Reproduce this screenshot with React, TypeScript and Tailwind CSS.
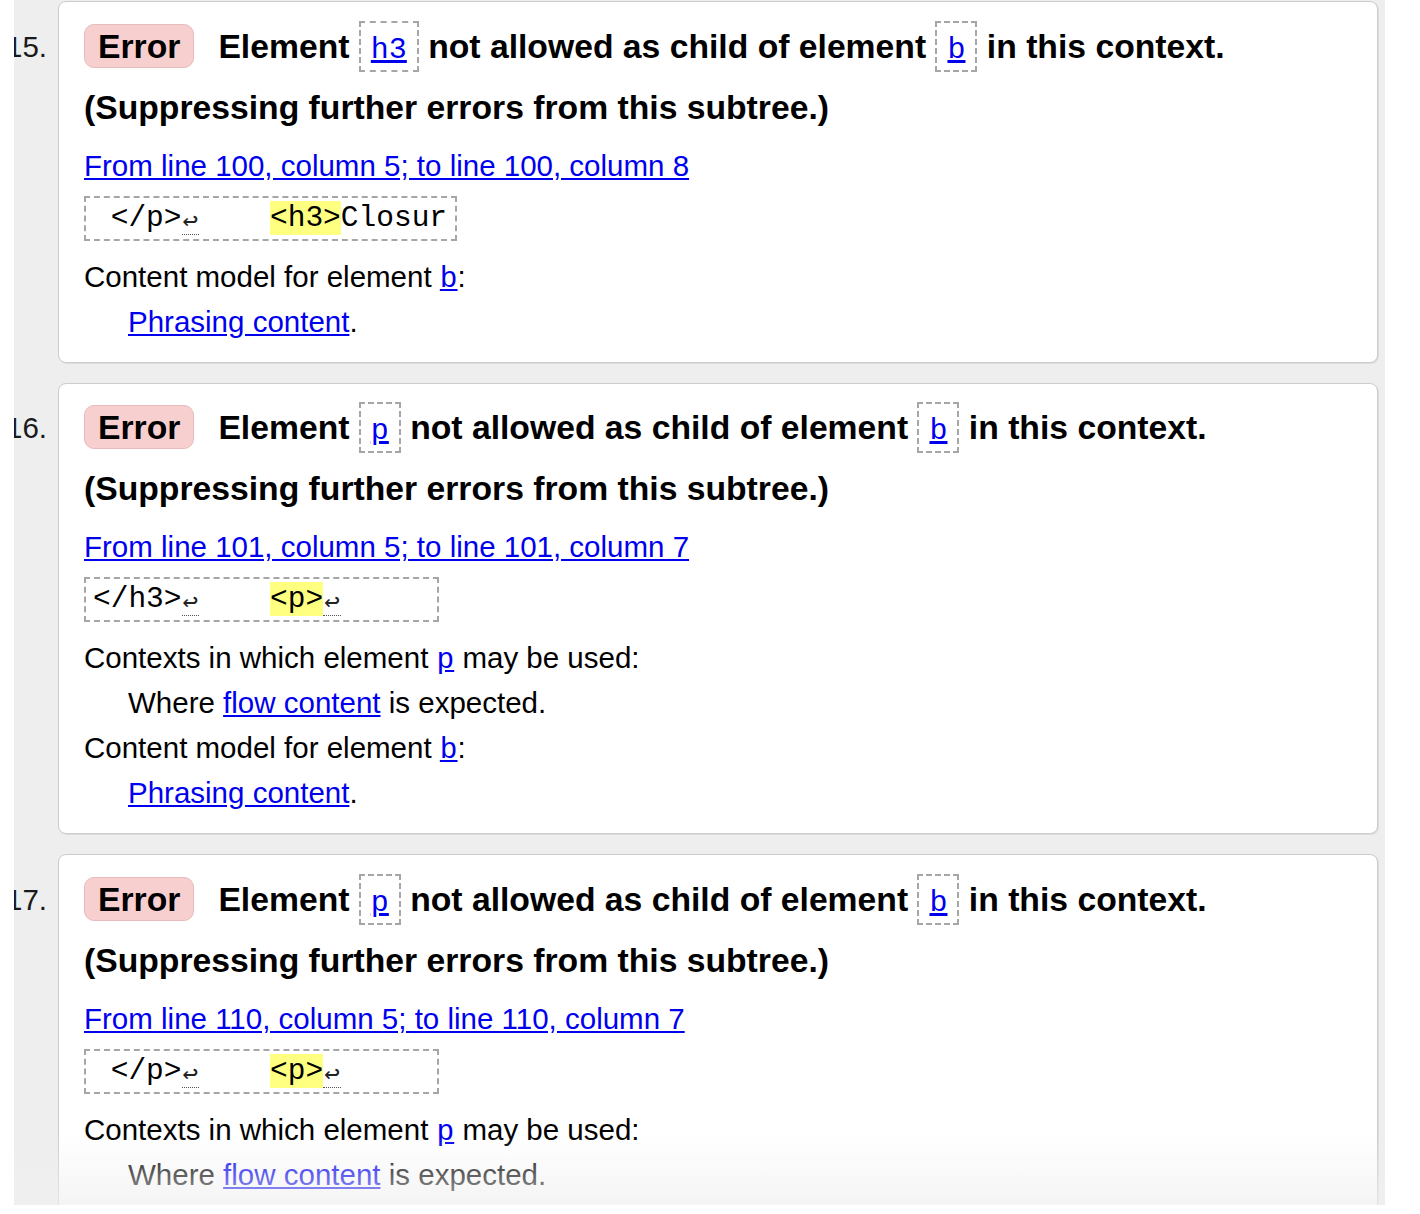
import React from 'react';

type Piece = { t: string; kind?: 'mark' | 'lf' };

type Issue = {
  n: number;
  el: string;
  range: string;
  extract: Piece[];
  boxW: string;
  contexts: boolean;
};

const issues: Issue[] = [
  {
    n: 15,
    el: 'h3',
    range: 'From line 100, column 5; to line 100, column 8',
    extract: [{ t: ' </p>' }, { t: '↩', kind: 'lf' }, { t: '    ' }, { t: '<h3>', kind: 'mark' }, { t: 'Closur' }],
    boxW: 'w-[373px]',
    contexts: false,
  },
  {
    n: 16,
    el: 'p',
    range: 'From line 101, column 5; to line 101, column 7',
    extract: [{ t: '</h3>' }, { t: '↩', kind: 'lf' }, { t: '    ' }, { t: '<p>', kind: 'mark' }, { t: '↩', kind: 'lf' }],
    boxW: 'w-[355px]',
    contexts: true,
  },
  {
    n: 17,
    el: 'p',
    range: 'From line 110, column 5; to line 110, column 7',
    extract: [{ t: ' </p>' }, { t: '↩', kind: 'lf' }, { t: '    ' }, { t: '<p>', kind: 'mark' }, { t: '↩', kind: 'lf' }],
    boxW: 'w-[355px]',
    contexts: true,
  },
];

const sans = "font-['Liberation_Sans',Arial,sans-serif]";
const mono = "font-['Liberation_Mono','DejaVu_Sans_Mono',monospace]";

export default function App() {
  return (
    <div className={`relative h-[1214px] w-full overflow-hidden bg-white text-black ${sans}`}>
      <div className="relative ml-[14px] h-[1205px] w-[1371px] overflow-hidden bg-[#eeeeee]">
        <div className="flex flex-col gap-[20px] pt-[1px]">
          {issues.map((it) => (
            <IssueRow key={it.n} issue={it} />
          ))}
        </div>
        {/* fade at the bottom of the scrolled area */}
        <div className="absolute bottom-0 left-0 h-[70px] w-full bg-linear-to-b from-[#f3f3f3]/0 to-[#f0f0f0]/70" />
      </div>
    </div>
  );
}

function IssueRow({ issue }: { issue: Issue }) {
  return (
    <div className="flex">
      <div className="flex w-[44px] shrink-0 justify-end pr-[11px] pt-[14.5px] text-[29.5px] leading-[61px] whitespace-nowrap text-[#1a1a1a]">
        {issue.n}.
      </div>
      <div className="w-[1320px] shrink-0 rounded-[8px] border border-[#cccccc] bg-white pt-[13.5px] pb-[18px] pl-[25px] shadow-[1px_1px_0_#dddddd]">
        <p className="text-[33.7px] font-bold leading-[61px]">
          <span className="inline-block rounded-[10px] border border-[#e8bcbc] bg-[#f7cfcf] px-[13px] py-[2px] leading-[38px]">
            Error
          </span>
          <span className="ml-[24px]">Element </span>
          <Chip name={issue.el} /> not allowed as child of element <Chip name="b" /> in this context.
          <br />
          (Suppressing further errors from this subtree.)
        </p>

        <p className="mt-[5px] h-[45px] text-[29.5px] leading-[45px]">
          <a className="text-[#0000ee] underline">{issue.range}</a>
        </p>

        <div
          className={`mt-[8px] h-[45px] ${issue.boxW} overflow-hidden border-2 border-dashed border-[#a6a6a6] px-[7px] py-[3px] text-[29.5px] leading-[35px] whitespace-pre ${mono}`}
        >
          {issue.extract.map((p, i) =>
            p.kind === 'mark' ? (
              <span key={i} className="bg-[#ffff80]">
                {p.t}
              </span>
            ) : p.kind === 'lf' ? (
              <Lf key={i} />
            ) : (
              <span key={i}>{p.t}</span>
            ),
          )}
        </div>

        <dl className="mt-[13px] text-[29.5px] leading-[45px]">
          {issue.contexts && (
            <>
              <dt className="h-[45px]">
                Contexts in which element <Code>p</Code> may be used:
              </dt>
              <dd className="h-[45px] pl-[44px]">
                Where <a className="text-[#0000ee] underline">flow content</a> is expected.
              </dd>
            </>
          )}
          <dt className="h-[45px]">
            Content model for element <Code>b</Code>:
          </dt>
          <dd className="h-[45px] pl-[44px]">
            <a className="text-[#0000ee] underline">Phrasing content</a>.
          </dd>
        </dl>
      </div>
    </div>
  );
}

function Chip({ name }: { name: string }) {
  return (
    <span
      className={`inline-block border-2 border-dashed border-[#a6a6a6] px-[10px] pt-[10px] pb-[3px] text-[30px] font-normal leading-[34px] text-[#0000ee] underline ${mono}`}
    >
      {name}
    </span>
  );
}

function Code({ children }: { children: React.ReactNode }) {
  return <a className={`leading-none text-[#0000ee] underline ${mono}`}>{children}</a>;
}

function Lf() {
  return (
    <span className="inline-block w-[17.7px] border-b border-dotted border-[#555] text-center align-[-3px] text-[26px] leading-[24px] text-[#222]">
      ↩
    </span>
  );
}
